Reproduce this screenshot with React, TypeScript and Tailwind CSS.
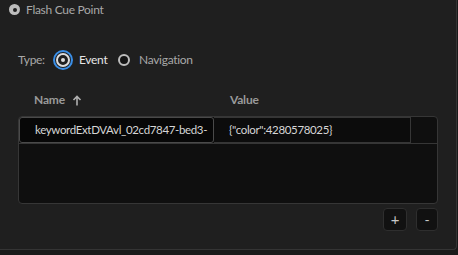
import React from "react";

export default function App() {
  return (
    <div className="w-[458px] h-[255px] bg-[#1a1a1a] overflow-hidden" style={{ fontFamily: 'Lato, "Noto Sans", sans-serif' }}>
      <div className="w-[457px] h-[250px] bg-[#1f1f1f] border-r border-b border-[#343434] rounded-br-[4px] flex flex-col">
        <div className="flex items-center h-[19px] pl-[9px] gap-[6px]">
          <div className="w-[11px] h-[11px] rounded-full bg-[#bdbdbd] flex items-center justify-center">
            <div className="w-[4px] h-[4px] rounded-full bg-[#1f1f1f]" />
          </div>
          <span className="text-[12px] tracking-[-0.3px] text-[#a8a8a8]">Flash Cue Point</span>
        </div>
        <div className="flex items-center h-[20px] mt-[31px] pl-[18px]">
          <span className="w-[35px] text-[12px] tracking-[-0.3px] text-[#a8a8a8]">Type:</span>
          <div className="w-[20px] h-[20px] rounded-full border-2 border-[#3a8ee6] flex items-center justify-center">
            <div className="w-[14px] h-[14px] rounded-full border-2 border-[#dcdcdc] bg-[#1f1f1f] flex items-center justify-center">
              <div className="w-[4px] h-[4px] rounded-full bg-[#dcdcdc]" />
            </div>
          </div>
          <span className="text-[12px] tracking-[-0.3px] text-[#e6e6e6] ml-[6px] w-[39px]">Event</span>
          <div className="w-[12px] h-[12px] rounded-full border-2 border-[#bdbdbd] bg-[#141414]" />
          <span className="text-[12px] tracking-[-0.3px] text-[#a8a8a8] ml-[9px]">Navigation</span>
        </div>
        <div className="flex items-center h-[22px] mt-[19px] pl-[34px] text-[12px] tracking-[-0.2px] font-bold text-[#9a9a9a]">
          <span className="w-[196px] flex items-center gap-[7px]">
            Name
            <svg width="10" height="11" viewBox="0 0 10 11" fill="none" stroke="#b0b0b0" strokeWidth="1.6">
              <path d="M5 10.5V1.5M1.5 5L5 1.5L8.5 5" />
            </svg>
          </span>
          <span>Value</span>
        </div>
        <div className="ml-[18px] mt-[5px] w-[420px] h-[88px] bg-[#0f0f0f] border border-[#363636] rounded-[4px] flex flex-col">
          <div className="flex h-[27px] border-b border-[#363636]">
            <div className="w-[195px] h-full bg-[#070707] border border-[#4a4a4a] rounded-[3px] flex items-center pl-[15px] text-[11.5px] tracking-[-0.35px] text-[#d6d6d6] overflow-hidden whitespace-nowrap">
              keywordExtDVAvl_02cd7847-bed3-
            </div>
            <div className="w-[197px] h-full bg-[#0c0c0c] border-y border-r border-[#363636] flex items-center pl-[15px] text-[11.5px] tracking-[-0.35px] text-[#d6d6d6]">
              {'{"color":4280578025}'}
            </div>
            <div className="flex-1 h-full" />
          </div>
        </div>
        <div className="flex justify-end gap-[9px] mt-[4px] mr-[18px]">
          <div className="w-[24px] h-[23px] bg-[#111111] border border-[#2e2e2e] rounded-[4px] flex items-center justify-center text-[15px] text-[#c8c8c8]">+</div>
          <div className="w-[22px] h-[23px] bg-[#111111] border border-[#2e2e2e] rounded-[4px] flex items-center justify-center text-[14px] text-[#c8c8c8]">-</div>
        </div>
      </div>
    </div>
  );
}
